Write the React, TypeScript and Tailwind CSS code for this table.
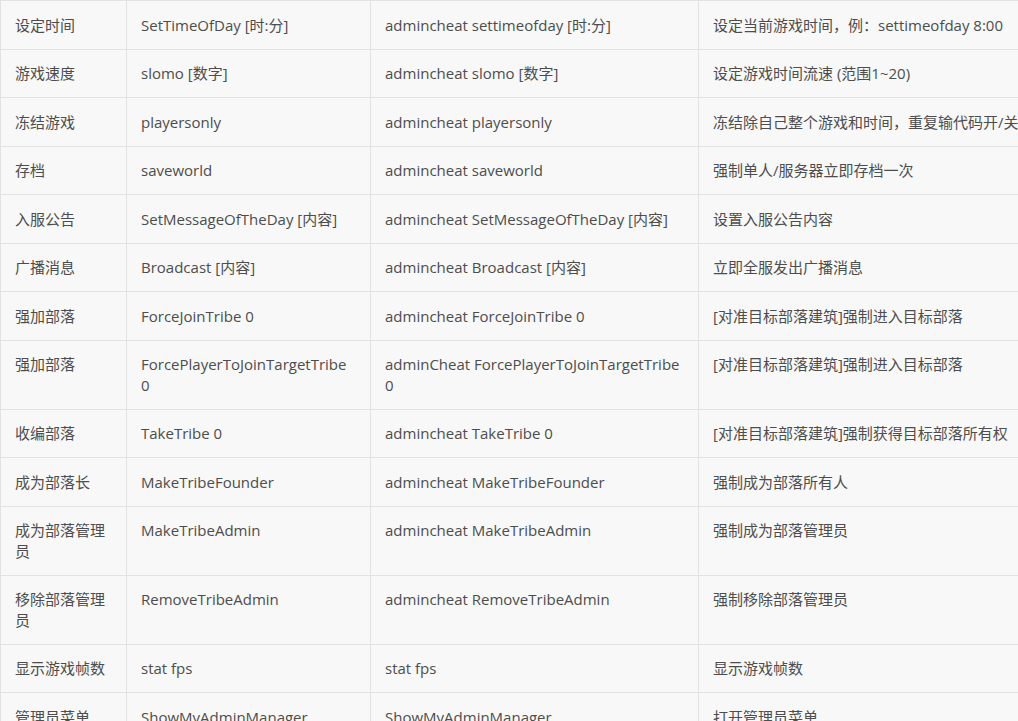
import React from 'react';

type Row = [string, string, string, string];

const ROWS: Row[] = [
    ['设定时间', 'SetTimeOfDay [时:分]', 'admincheat settimeofday [时:分]', '设定当前游戏时间，例：settimeofday 8:00'],
    ['游戏速度', 'slomo [数字]', 'admincheat slomo [数字]', '设定游戏时间流速 (范围1~20)'],
    ['冻结游戏', 'playersonly', 'admincheat playersonly', '冻结除自己整个游戏和时间，重复输代码开/关'],
    ['存档', 'saveworld', 'admincheat saveworld', '强制单人/服务器立即存档一次'],
    ['入服公告', 'SetMessageOfTheDay [内容]', 'admincheat SetMessageOfTheDay [内容]', '设置入服公告内容'],
    ['广播消息', 'Broadcast [内容]', 'admincheat Broadcast [内容]', '立即全服发出广播消息'],
    ['强加部落', 'ForceJoinTribe 0', 'admincheat ForceJoinTribe 0', '[对准目标部落建筑]强制进入目标部落'],
    ['强加部落', 'ForcePlayerToJoinTargetTribe 0', 'adminCheat ForcePlayerToJoinTargetTribe 0', '[对准目标部落建筑]强制进入目标部落'],
    ['收编部落', 'TakeTribe 0', 'admincheat TakeTribe 0', '[对准目标部落建筑]强制获得目标部落所有权'],
    ['成为部落长', 'MakeTribeFounder', 'admincheat MakeTribeFounder', '强制成为部落所有人'],
    ['成为部落管理员', 'MakeTribeAdmin', 'admincheat MakeTribeAdmin', '强制成为部落管理员'],
    ['移除部落管理员', 'RemoveTribeAdmin', 'admincheat RemoveTribeAdmin', '强制移除部落管理员'],
    ['显示游戏帧数', 'stat fps', 'stat fps', '显示游戏帧数'],
    ['管理员菜单', 'ShowMyAdminManager', 'ShowMyAdminManager', '打开管理员菜单'],
];

const App: React.FC = () => {
    return (
        <div
            className="w-screen h-screen overflow-hidden bg-[#f8f8f8] text-[#4d4d4d]"
            style={{ fontFamily: '"Open Sans", "Noto Sans CJK SC", sans-serif' }}
        >
            <table className="table-fixed border-collapse w-[1068px] text-[15px] leading-[20.5px]">
                <colgroup>
                    <col className="w-[126px]" />
                    <col className="w-[244px]" />
                    <col className="w-[328px]" />
                    <col className="w-[370px]" />
                </colgroup>
                <tbody>
                    {ROWS.map((row, i) => (
                        <tr key={i}>
                            {row.map((cell, j) => (
                                <td
                                    key={j}
                                    className="border border-[#e2e2e2] px-[14px] py-[13.5px] align-top break-words"
                                >
                                    {cell}
                                </td>
                            ))}
                        </tr>
                    ))}
                </tbody>
            </table>
        </div>
    );
};

export default App;
